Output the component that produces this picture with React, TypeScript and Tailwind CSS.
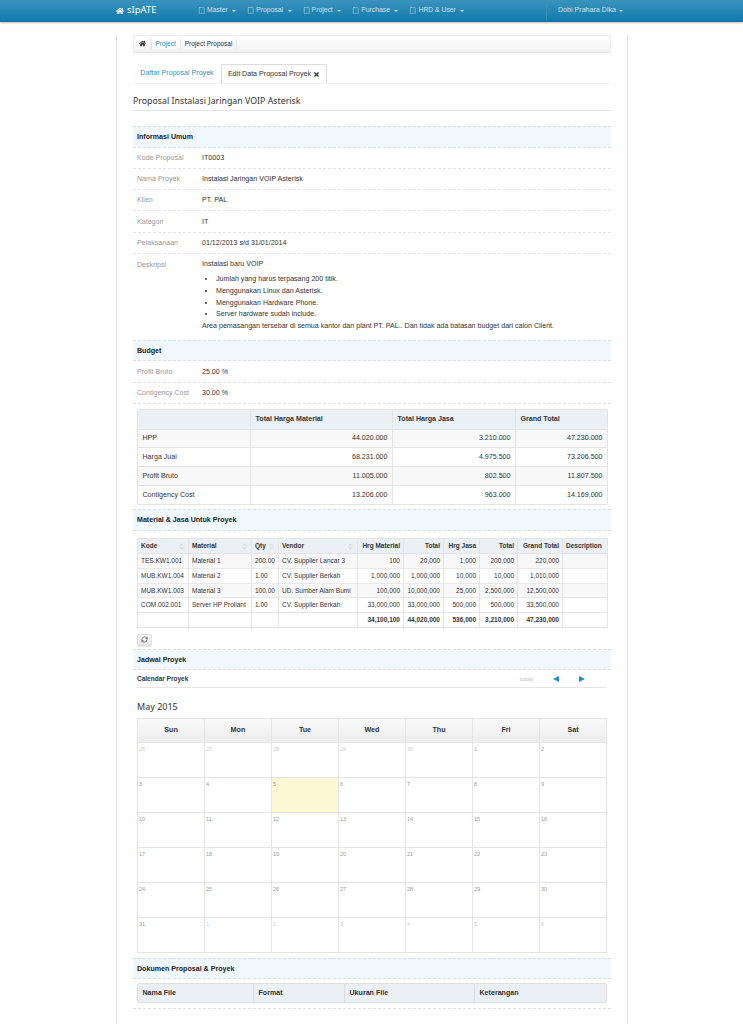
import { ChevronsUpDown, RefreshCw, Tablet } from "lucide-react"
import { FaHome, FaTimes } from "react-icons/fa"

const navItems = ["Master", "Proposal", "Project", "Purchase", "HRD & User"]

const infoRows = [
  ["Kode Proposal", "IT0003"],
  ["Nama Proyek", "Instalasi Jaringan VOIP Asterisk"],
  ["Klien", "PT. PAL"],
  ["Kategori", "IT"],
  ["Pelaksanaan", "01/12/2013 s/d 31/01/2014"],
]

const bullets = [
  "Jumlah yang harus terpasang 200 titik.",
  "Menggunakan Linux dan Asterisk.",
  "Menggunakan Hardware Phone.",
  "Server hardware sudah include.",
]

const budgetRows = [
  ["HPP", "44.020.000", "3.210.000", "47.230.000"],
  ["Harga Jual", "68.231.000", "4.975.500", "73.206.500"],
  ["Profit Bruto", "11.005.000", "802.500", "11.807.500"],
  ["Contigency Cost", "13.206.000", "963.000", "14.169.000"],
]

const materialCols = [
  { label: "Kode", width: "w-[51px]", sort: true },
  { label: "Material", width: "w-[63px]", sort: true },
  { label: "Qty", width: "w-[27px]", sort: true },
  { label: "Vendor", width: "w-[79px]", sort: true },
  { label: "Hrg Material", width: "w-[46px]", right: true },
  { label: "Total", width: "w-[40px]", right: true },
  { label: "Hrg Jasa", width: "w-[36px]", right: true },
  { label: "Total", width: "w-[38px]", right: true },
  { label: "Grand Total", width: "w-[45px]", right: true },
  { label: "Description", width: "w-[45px]" },
]

const materialRows = [
  ["TES.KW1.001", "Material 1", "200.00", "CV. Supplier Lancar 3", "100", "20,000", "1,000", "200,000", "220,000", ""],
  ["MUB.KW1.004", "Material 2", "1.00", "CV. Supplier Berkah", "1,000,000", "1,000,000", "10,000", "10,000", "1,010,000", ""],
  ["MUB.KW1.003", "Material 3", "100.00", "UD. Sumber Alam Bumi", "100,000", "10,000,000", "25,000", "2,500,000", "12,500,000", ""],
  ["COM.002.001", "Server HP Proliant", "1.00", "CV. Supplier Berkah", "33,000,000", "33,000,000", "500,000", "500,000", "33,500,000", ""],
]

const materialTotal = ["", "", "", "", "34,100,100", "44,020,000", "536,000", "3,210,000", "47,230,000", ""]

const days = ["Sun", "Mon", "Tue", "Wed", "Thu", "Fri", "Sat"]

const weeks = [
  ["26", "27", "28", "29", "30", "1", "2"],
  ["3", "4", "5", "6", "7", "8", "9"],
  ["10", "11", "12", "13", "14", "15", "16"],
  ["17", "18", "19", "20", "21", "22", "23"],
  ["24", "25", "26", "27", "28", "29", "30"],
  ["31", "1", "2", "3", "4", "5", "6"],
]

const Section = ({ title }: { title: string }) => (
  <div className="flex h-[21.5px] items-center border-y border-dashed border-[#ddd] bg-[#f0f7fd] px-1 pt-px font-bold text-[#222]">
    {title}
  </div>
)

const Row = ({ label, value }: { label: string; value: string }) => (
  <div className="flex h-[21.3px] items-center border-b border-dashed border-[#e2e2e2] pt-px">
    <span className="w-[69px] pl-1 text-[#999]">{label}</span>
    <span>{value}</span>
  </div>
)

const App = () => {
  return (
    <div className="h-[1024px] w-[743px] overflow-hidden bg-white font-['Liberation_Sans',Arial,sans-serif] text-[7.1px] text-[#333]">
      <header className="flex h-[22px] items-center border-b border-[#0b6d99] bg-gradient-to-b from-[#3a93bd] to-[#0b7bab] text-[#cde3ee] shadow-[0_1px_2px_rgba(0,0,0,0.25)]">
        <div className="ml-[116px] flex w-[82px] items-center gap-[3px] font-['Noto_Sans',sans-serif] text-[9.5px] text-white">
          <FaHome className="size-[8px]" />
          sIpATE
        </div>
        <nav className="flex w-[348px] items-center gap-[11px] text-[6.8px]">
          {navItems.map((item) => (
            <span key={item} className="flex items-center gap-[1.5px]">
              <Tablet className="size-[7.5px]" strokeWidth={1.5} />
              {item}
              <span className="ml-[3px] size-0 border-x-[2px] border-t-[2px] border-x-transparent border-t-[#cde3ee]" />
            </span>
          ))}
        </nav>
        <div className="flex h-full items-center border-l border-[#3c8fb5] pl-[11px]">
          Dobi Prahara Dika
          <span className="ml-[3px] size-0 border-x-[2px] border-t-[2px] border-x-transparent border-t-[#cde3ee]" />
        </div>
      </header>

      <main className="ml-[116px] h-[1002px] w-[512px] border-x border-[#ddd] px-4">
        <div className="mt-[13px] flex h-[17px] items-center gap-[4px] rounded-[2px] border border-[#eee] bg-gradient-to-b from-white to-[#f3f3f3] px-[5px] text-[6.5px] shadow-[0_1px_1px_rgba(0,0,0,0.1)]">
          <span className="flex h-[10px] items-center border-r border-[#e4e4e4] pr-[4.5px]">
            <FaHome className="size-[7px] text-[#333]" />
          </span>
          <span className="flex h-[10px] items-center border-r border-[#e4e4e4] pr-[4px] text-[#2f8fc4]">Project</span>
          <span className="flex h-[10px] items-center border-r border-[#e4e4e4] pr-[4px]">Project Proposal</span>
        </div>

        <div className="mt-3 flex h-[20px] border-b border-[#eee]">
          <span className="flex w-[88px] items-center justify-center text-[#2f8fc4]">Daftar Proposal Proyek</span>
          <span className="flex w-[106px] items-center justify-center gap-[2px] rounded-t-[2px] border-x border-t border-[#ddd] bg-white">
            Edit Data Proposal Proyek
            <FaTimes className="size-[7px] text-[#333]" />
          </span>
        </div>

        <h1 className="flex h-[27px] items-center border-b border-[#e5e5e5] pt-[10px] font-['Noto_Sans',sans-serif] text-[8.8px] text-[#333]">
          Proposal Instalasi Jaringan VOIP Asterisk
        </h1>

        <div className="mt-[15px]">
          <Section title="Informasi Umum" />
          {infoRows.map(([label, value]) => (
            <Row key={label} label={label} value={value} />
          ))}
          <div className="flex h-[86px]">
            <span className="w-[69px] pl-1 pt-[6px] text-[#999]">Deskripsi</span>
            <div className="pt-[6px]">
              <p className="leading-[8px]">Instalasi baru VOIP</p>
              <ul className="mt-[6px] ml-[14px] list-disc leading-[11.8px]">
                {bullets.map((b) => (
                  <li key={b}>{b}</li>
                ))}
              </ul>
              <p className="leading-[10px]">
                Area pemasangan tersebar di semua kantor dan plant PT. PAL.. Dan tidak ada batasan budget dari calon Client.
              </p>
            </div>
          </div>
        </div>

        <Section title="Budget" />
        <Row label="Profit Bruto" value="25.00 %" />
        <Row label="Contigency Cost" value="30.00 %" />

        <table className="mt-[5px] ml-1 w-[470px] table-fixed border-collapse overflow-hidden rounded-[2px]">
          <colgroup>
            <col className="w-[113px]" />
            <col className="w-[142px]" />
            <col className="w-[123px]" />
            <col className="w-[92px]" />
          </colgroup>
          <thead>
            <tr className="h-[19.5px] bg-[#eaf0f3] text-left font-bold">
              <th className="border border-[#e4e4e4]" />
              <th className="border border-[#e4e4e4] px-[4.5px]">Total Harga Material</th>
              <th className="border border-[#e4e4e4] px-[4.5px]">Total Harga Jasa</th>
              <th className="border border-[#e4e4e4] px-[4.5px]">Grand Total</th>
            </tr>
          </thead>
          <tbody>
            {budgetRows.map((row, i) => (
              <tr key={row[0]} className={i % 2 === 0 ? "h-[18.8px] bg-[#f8f8f8]" : "h-[18.8px] bg-white"}>
                {row.map((cell, c) => (
                  <td key={c} className={c === 0 ? "border border-[#e4e4e4] px-[4.5px]" : "border border-[#e4e4e4] px-[4.5px] text-right"}>
                    {cell}
                  </td>
                ))}
              </tr>
            ))}
          </tbody>
        </table>

        <div className="mt-[4.5px]">
          <Section title="Material & Jasa Untuk Proyek" />
        </div>

        <table className="mt-[7.5px] ml-1 w-[470px] table-fixed border-collapse text-[6.5px]">
          <colgroup>
            {materialCols.map((col, i) => (
              <col key={i} className={col.width} />
            ))}
          </colgroup>
          <thead>
            <tr className="h-[15px] bg-[#eaf0f3] font-bold">
              {materialCols.map((col, i) => (
                <th key={i} className={col.right ? "border border-[#e4e4e4] px-[3px] text-right" : "border border-[#e4e4e4] px-[3px] text-left"}>
                  <span className="flex items-center justify-between">
                    <span className={col.right ? "w-full whitespace-nowrap" : "whitespace-nowrap"}>{col.label}</span>
                    {col.sort && <ChevronsUpDown className="size-[7px] text-[#bbb]" />}
                  </span>
                </th>
              ))}
            </tr>
          </thead>
          <tbody>
            {materialRows.map((row, i) => (
              <tr key={row[0]} className={i % 2 === 0 ? "h-[14.7px] border-b border-[#e8e8e8] bg-[#f8f8f8]" : "h-[14.7px] border-b border-[#e8e8e8] bg-white"}>
                {row.map((cell, c) => (
                  <td key={c} className={materialCols[c].right ? "overflow-hidden border-x border-[#e4e4e4] px-[3px] text-right whitespace-nowrap" : "overflow-hidden border-x border-[#e4e4e4] px-[3px] whitespace-nowrap"}>
                    {cell}
                  </td>
                ))}
              </tr>
            ))}
            <tr className="h-[14.7px] font-bold">
              {materialTotal.map((cell, c) => (
                <td key={c} className="overflow-hidden border border-[#e4e4e4] px-[3px] text-right whitespace-nowrap">
                  {cell}
                </td>
              ))}
            </tr>
          </tbody>
        </table>

        <button className="mt-[6px] ml-1 flex h-[12px] w-[15px] items-center justify-center rounded-[2px] border border-[#ddd] bg-gradient-to-b from-white to-[#e6e6e6] shadow-[0_1px_1px_rgba(0,0,0,0.1)]">
          <RefreshCw className="size-[7px] text-[#333]" />
        </button>

        <div className="mt-[3px]">
          <Section title="Jadwal Proyek" />
        </div>

        <div className="ml-1 flex h-[18px] w-[470px] items-center border-b border-[#e5e5e5] text-[6.5px] font-bold">
          <span className="w-[383px]">Calendar Proyek</span>
          <span className="w-[33px] text-[5.5px] font-normal text-[#bbb]">today</span>
          <svg className="h-[6px] w-[6px] text-[#1c8fd0]" viewBox="0 0 6 6">
            <polygon points="6,0 0,3 6,6" fill="currentColor" />
          </svg>
          <svg className="ml-[20px] h-[6px] w-[6px] text-[#1c8fd0]" viewBox="0 0 6 6">
            <polygon points="0,0 6,3 0,6" fill="currentColor" />
          </svg>
        </div>

        <div className="mt-[11px] ml-1 flex h-[19px] items-center pb-[3px] font-['Noto_Sans',sans-serif] text-[9px]">May 2015</div>

        <table className="ml-1 w-[470px] table-fixed border-collapse">
          <thead>
            <tr className="h-[24px] bg-gradient-to-b from-[#fafafa] to-[#ececec] text-[7.2px] font-bold">
              {days.map((d) => (
                <th key={d} className="border border-[#e4e4e4]">{d}</th>
              ))}
            </tr>
          </thead>
          <tbody>
            {weeks.map((week, w) => (
              <tr key={w} className="h-[35px]">
                {week.map((day, d) => {
                  const outside = (w === 0 && d < 5) || (w === 5 && d > 0)
                  const today = w === 1 && d === 2
                  return (
                    <td key={d} className={today ? "border border-[#e4e4e4] bg-[#fcf8d3] px-px pt-[2px] align-top text-[5.5px] text-[#999]" : outside ? "border border-[#e4e4e4] px-px pt-[2px] align-top text-[5.5px] text-[#ccc]" : "border border-[#e4e4e4] px-px pt-[2px] align-top text-[5.5px] text-[#999]"}>
                      {day}
                    </td>
                  )
                })}
              </tr>
            ))}
          </tbody>
        </table>

        <div className="mt-[4.5px]">
          <Section title="Dokumen Proposal & Proyek" />
        </div>

        <div className="border-b border-dashed border-[#ddd] pt-1 pb-[5px]">
          <div className="ml-1 grid h-[20px] w-[470px] grid-cols-[116px_91px_130px_133px] items-center rounded-[2px] border border-[#e0e0e0] bg-[#eaf0f3] font-bold">
            {["Nama File", "Format", "Ukuran File", "Keterangan"].map((h) => (
              <span key={h} className="flex h-full items-center border-r border-[#dcdcdc] px-[4.5px] last:border-r-0">{h}</span>
            ))}
          </div>
        </div>
      </main>
    </div>
  )
}

export default App
